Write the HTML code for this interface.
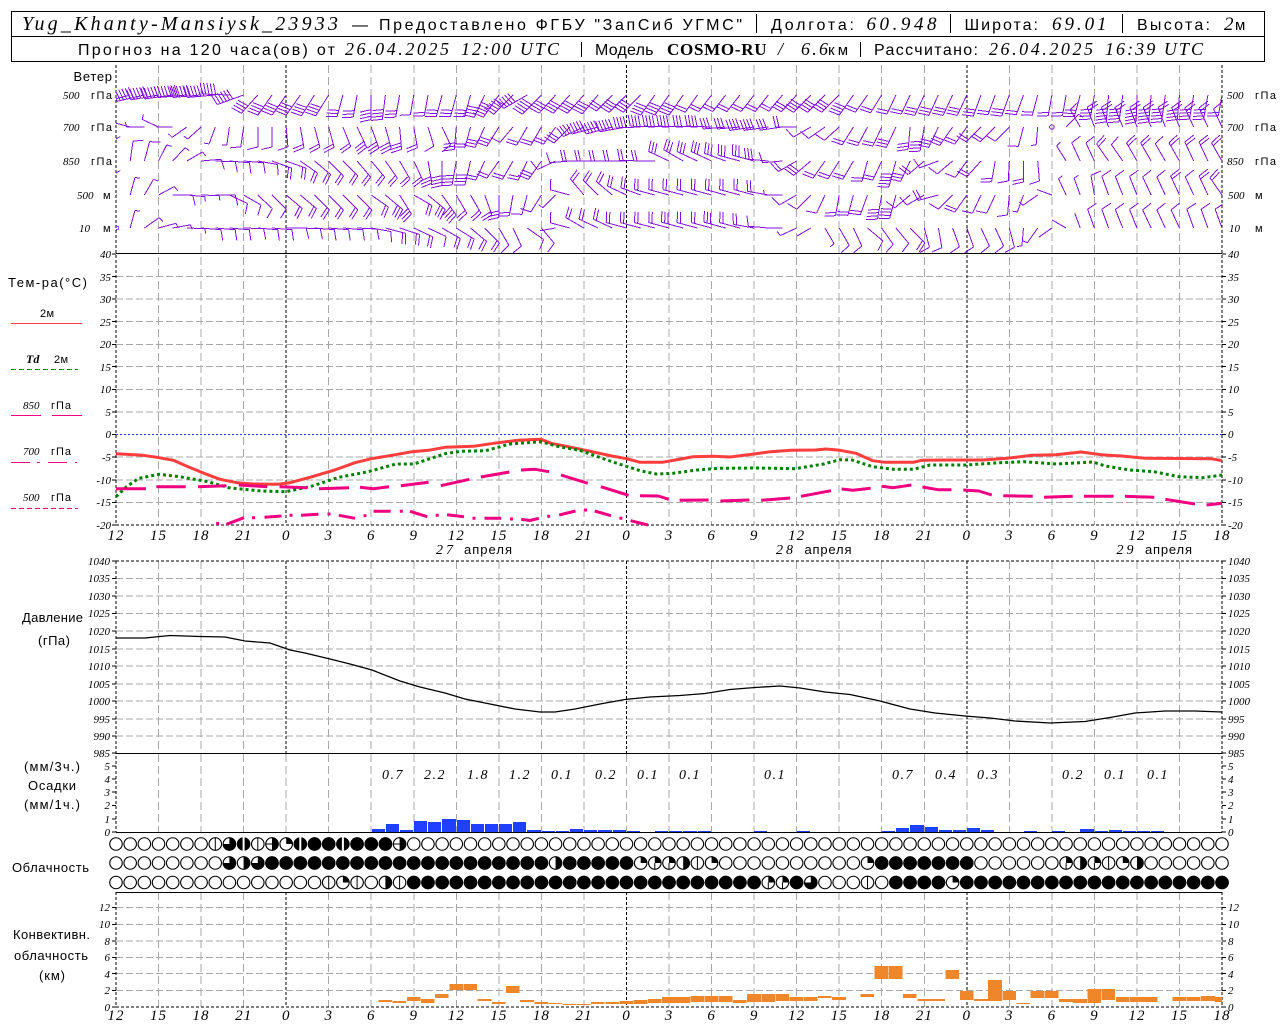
<!DOCTYPE html>
<html><head><meta charset="utf-8"><style>
html,body{margin:0;padding:0;background:#fff}
svg{display:block}
text{fill:#000;white-space:pre}
.s{font-family:"Liberation Sans","DejaVu Sans",sans-serif}
.i{font-family:"Liberation Serif",serif;font-style:italic}
.a{font-family:"Liberation Serif",serif;font-style:italic;font-size:11px}
.h{font-family:"Liberation Serif",serif;font-style:italic;font-size:15px;letter-spacing:1px;text-anchor:middle}
.p{font-family:"Liberation Serif",serif;font-style:italic;font-size:14px;letter-spacing:1.5px;text-anchor:middle}
.e{text-anchor:end}
</style></head><body>
<svg xmlns="http://www.w3.org/2000/svg" width="1280" height="1024" viewBox="0 0 1280 1024">
<defs>
<clipPath id="cp"><rect x="116" y="60" width="1106.5" height="200"/></clipPath>
<path id="z" d="M0 0V-16"/>
<path id="h" d="M0 0V-18M0-18l5-1"/>
<path id="b1" d="M0 0V-20M0-20l10.5-2.5"/>
<path id="b2" d="M0 0V-21M0-21l11-2.5M0-17.7l11-2.5"/>
<path id="b3" d="M0 0V-22.5M0-22.5l11-2.5M0-19.2l11-2.5M0-15.9l11-2.5"/>
<path id="b4" d="M0 0V-24.5M0-24.5l11-2.5M0-21.2l11-2.5M0-17.9l11-2.5M0-14.6l11-2.5"/>
<path id="b5" d="M0 0V-27M0-27l11-2.5M0-23.7l11-2.5M0-20.4l11-2.5M0-17.1l11-2.5M0-13.8l11-2.5"/>
<path id="b6" d="M0 0V-28M0-28l11-2.5M0-24.7l11-2.5M0-21.4l11-2.5M0-18.1l11-2.5M0-14.8l11-2.5M0-11.5l11-2.5"/>
<path id="b7" d="M0 0V-29M0-29l11-2.5M0-25.7l11-2.5M0-22.4l11-2.5M0-19.1l11-2.5M0-15.8l11-2.5M0-12.5l11-2.5M0-9.2l11-2.5"/>
<g id="cV"><circle r="6.2" fill="#fff" stroke="#000"/><path d="M0-6V6" stroke="#000" fill="none"/></g>
<g id="cQ"><circle r="6.2" fill="#fff" stroke="#000"/><path d="M0 0V-6.6A6.6 6.6 0 0 1 6.6 0Z"/></g>
<g id="cW"><circle r="6.2" fill="#fff" stroke="#000"/><path d="M0 0V-6.6A6.6 6.6 0 0 1 6.6 0Z"/><path d="M0 0V6" stroke="#000" fill="none"/></g>
<g id="cR"><circle r="6.2" fill="#fff" stroke="#000"/><path d="M0-6.6A6.6 6.6 0 0 1 0 6.6Z"/></g>
<g id="cT"><circle r="6.2" fill="#fff" stroke="#000"/><path d="M0-6.6A6.6 6.6 0 0 1 0 6.6Z"/><path d="M-6 0H0" stroke="#000" fill="none"/></g>
<g id="cA"><circle r="6.2" fill="#fff" stroke="#000"/><path d="M0 0V-6.6A6.6 6.6 0 1 1-6.6 0Z"/></g>
<g id="cS"><circle r="6.6"/><rect x="-1" y="-7" width="2" height="14" fill="#fff"/></g>
</defs>

<!-- header -->
<g fill="none" stroke="#000" stroke-width="1" shape-rendering="crispEdges">
<rect x="11.5" y="11.5" width="1253" height="50"/>
<path d="M11 36.5H1265M756.5 14V33M950.5 14V33M1122.5 14V33M581.5 42V57M860.5 42V57"/>
</g>
<text class="i" x="22" y="30" font-size="20" textLength="316">Yug_Khanty-Mansiysk_23933</text>
<text class="s" x="352" y="30" font-size="16" textLength="11">—</text>
<text class="s" x="379" y="30" font-size="16" textLength="363">Предоставлено ФГБУ "ЗапСиб УГМС"</text>
<text class="s" x="771" y="30" font-size="16" textLength="83">Долгота:</text>
<text class="i" x="866.5" y="30" font-size="19" textLength="70">60.948</text>
<text class="s" x="964.5" y="30" font-size="16" textLength="73.5">Широта:</text>
<text class="i" x="1052" y="30" font-size="19" textLength="54.5">69.01</text>
<text class="s" x="1137" y="30" font-size="16" textLength="73">Высота:</text>
<text class="i" x="1224" y="30" font-size="19">2</text><text class="s" x="1235" y="30" font-size="15">м</text>

<text class="s" x="78" y="55" font-size="16" textLength="257">Прогноз на 120 часа(ов) от</text>
<text class="i" x="345" y="55" font-size="18" textLength="104">26.04.2025</text>
<text class="i" x="461" y="55" font-size="18" textLength="98">12:00 UTC</text>
<text class="s" x="595" y="55" font-size="16" textLength="58.5">Модель</text>
<text font-family="Liberation Serif,serif" font-weight="bold" x="667" y="55" font-size="17" textLength="99.5">COSMO-RU</text>
<text class="i" x="778" y="55" font-size="18">/</text>
<text class="i" x="801" y="55" font-size="18" textLength="27">6.6</text>
<text class="s" x="828" y="55" font-size="15" textLength="20">км</text>
<text class="s" x="874" y="55" font-size="16" textLength="104">Рассчитано:</text>
<text class="i" x="989" y="55" font-size="18" textLength="104">26.04.2025</text>
<text class="i" x="1105" y="55" font-size="18" textLength="98">16:39 UTC</text>

<!-- grids -->
<g fill="none" shape-rendering="crispEdges" stroke-width="1">
<g stroke="#a8a8a8" stroke-dasharray="8 4">
<path d="M158.5 65V525M201.1 65V525M243.6 65V525M328.7 65V525M371.2 65V525M413.8 65V525M456.3 65V525M498.9 65V525M541.4 65V525M583.9 65V525M669 65V525M711.6 65V525M754.1 65V525M796.6 65V525M839.2 65V525M881.7 65V525M924.3 65V525M1009.3 65V525M1051.9 65V525M1094.4 65V525M1137 65V525M1179.5 65V525"/>
<path d="M158.5 561V753M201.1 561V753M243.6 561V753M328.7 561V753M371.2 561V753M413.8 561V753M456.3 561V753M498.9 561V753M541.4 561V753M583.9 561V753M669 561V753M711.6 561V753M754.1 561V753M796.6 561V753M839.2 561V753M881.7 561V753M924.3 561V753M1009.3 561V753M1051.9 561V753M1094.4 561V753M1137 561V753M1179.5 561V753"/>
<path d="M158.5 754V832M201.1 754V832M243.6 754V832M286.2 754V832M328.7 754V832M371.2 754V832M413.8 754V832M456.3 754V832M498.9 754V832M541.4 754V832M583.9 754V832M626.5 754V832M669 754V832M711.6 754V832M754.1 754V832M796.6 754V832M839.2 754V832M881.7 754V832M924.3 754V832M966.8 754V832M1009.3 754V832M1051.9 754V832M1094.4 754V832M1137 754V832M1179.5 754V832"/>
<path d="M158.5 892V1007M201.1 892V1007M243.6 892V1007M328.7 892V1007M371.2 892V1007M413.8 892V1007M456.3 892V1007M498.9 892V1007M541.4 892V1007M583.9 892V1007M669 892V1007M711.6 892V1007M754.1 892V1007M796.6 892V1007M839.2 892V1007M881.7 892V1007M924.3 892V1007M1009.3 892V1007M1051.9 892V1007M1094.4 892V1007M1137 892V1007M1179.5 892V1007"/>
</g>
<g stroke="#a8a8a8" stroke-dasharray="7 3">
<path d="M116 276.7H1222M116 299H1222M116 321.6H1222M116 344.3H1222M116 366.7H1222M116 389.3H1222M116 412H1222M116 457H1222M116 480H1222M116 502.5H1222"/>
<path d="M116 578.5H1222M116 596H1222M116 613.5H1222M116 631H1222M116 649H1222M116 666H1222M116 684H1222M116 701H1222M116 719H1222M116 736H1222"/>
<path d="M116 907.5H1222M116 924.5H1222M116 941H1222M116 957.5H1222M116 973.7H1222M116 990.5H1222"/>
</g>
<path d="M116 434.5H1222" stroke="#2233ff" stroke-dasharray="2 2"/>
<g stroke="#000" stroke-dasharray="3 2">
<path d="M116 65V525M286.2 65V525M626.5 65V525M966.8 65V525M1222 65V525"/>
<path d="M116 561V832M286.2 561V753M626.5 561V753M966.8 561V753M1222 561V832"/>
<path d="M116 892V1007M286.2 892V1007M626.5 892V1007M966.8 892V1007M1222 892V1007"/>
<path d="M116 525H1222M116 561H1222M116 1007H1222"/>
</g>
<path stroke="#000" d="M116 253.5H1222M116 753.5H1222M116 892.5H1222M116 832.5H1222"/>
<path stroke="#000" d="M112 254H116M112 276.7H116M112 299H116M112 321.6H116M112 344.3H116M112 366.7H116M112 389.3H116M112 412H116M112 434.5H116M112 457H116M112 480H116M112 502.5H116M112 525H116M1222 254H1226M1222 276.7H1226M1222 299H1226M1222 321.6H1226M1222 344.3H1226M1222 366.7H1226M1222 389.3H1226M1222 412H1226M1222 434.5H1226M1222 457H1226M1222 480H1226M1222 502.5H1226M1222 525H1226"/>
<path stroke="#000" d="M112 561H116M112 578.5H116M112 596H116M112 613.5H116M112 631H116M112 649H116M112 666H116M112 684H116M112 701H116M112 719H116M112 736H116M112 753H116M1222 561H1226M1222 578.5H1226M1222 596H1226M1222 613.5H1226M1222 631H1226M1222 649H1226M1222 666H1226M1222 684H1226M1222 701H1226M1222 719H1226M1222 736H1226M1222 753H1226"/>
<path stroke="#000" d="M112 766H116M112 779H116M112 792H116M112 805.5H116M112 819H116M112 832H116M1222 766H1226M1222 779H1226M1222 792H1226M1222 805.5H1226M1222 819H1226M1222 832H1226"/>
<path stroke="#000" d="M112 907.5H116M112 924.5H116M112 941H116M112 957.5H116M112 973.7H116M112 990.5H116M112 1007H116M1222 907.5H1226M1222 924.5H1226M1222 941H1226M1222 957.5H1226M1222 973.7H1226M1222 990.5H1226M1222 1007H1226"/>
</g>

<!-- wind barbs -->
<g clip-path="url(#cp)" fill="none" stroke="#8312e0" stroke-width="1" shape-rendering="crispEdges">
<g transform="translate(0,95)">
<use href="#b6" transform="translate(116)rotate(255)"/><use href="#b6" transform="translate(130.2)rotate(255)"/><use href="#b6" transform="translate(144.4)rotate(257)"/><use href="#b6" transform="translate(158.5)rotate(260)"/><use href="#b6" transform="translate(172.7)rotate(262)"/><use href="#b7" transform="translate(186.9)rotate(265)"/><use href="#b6" transform="translate(201.1)rotate(265)"/><use href="#b6" transform="translate(215.3)rotate(265)"/><use href="#b5" transform="translate(229.4)rotate(272)"/><use href="#b6" transform="translate(243.6)rotate(250)"/>
<use href="#b4" transform="translate(257.8)rotate(222)"/><use href="#b4" transform="translate(272)rotate(215)"/><use href="#b4" transform="translate(286.2)rotate(215)"/><use href="#b4" transform="translate(300.3)rotate(215)"/><use href="#b4" transform="translate(314.5)rotate(212)"/><use href="#b4" transform="translate(328.7)rotate(212)"/><use href="#b3" transform="translate(342.9)rotate(195)"/><use href="#b3" transform="translate(357.1)rotate(190)"/><use href="#b4" transform="translate(371.2)rotate(180)"/><use href="#b4" transform="translate(385.4)rotate(187)"/>
<use href="#b3" transform="translate(399.6)rotate(190)"/><use href="#b1" transform="translate(413.8)rotate(190)"/><use href="#b2" transform="translate(428)rotate(190)"/><use href="#b3" transform="translate(442.1)rotate(195)"/><use href="#b3" transform="translate(456.3)rotate(195)"/><use href="#b3" transform="translate(470.5)rotate(195)"/><use href="#b4" transform="translate(484.7)rotate(205)"/><use href="#b5" transform="translate(498.9)rotate(215)"/><use href="#b5" transform="translate(513)rotate(225)"/><use href="#b5" transform="translate(527.2)rotate(240)"/>
<use href="#b5" transform="translate(541.4)rotate(225)"/><use href="#b4" transform="translate(555.6)rotate(222)"/><use href="#b4" transform="translate(569.8)rotate(222)"/><use href="#b4" transform="translate(583.9)rotate(222)"/><use href="#b4" transform="translate(598.1)rotate(220)"/><use href="#b3" transform="translate(612.3)rotate(225)"/><use href="#b4" transform="translate(626.5)rotate(225)"/><use href="#b4" transform="translate(640.7)rotate(225)"/><use href="#b4" transform="translate(654.8)rotate(215)"/><use href="#b4" transform="translate(669)rotate(215)"/>
<use href="#b4" transform="translate(683.2)rotate(215)"/><use href="#b2" transform="translate(697.4)rotate(215)"/><use href="#b2" transform="translate(711.6)rotate(218)"/><use href="#b2" transform="translate(725.7)rotate(218)"/><use href="#b2" transform="translate(739.9)rotate(218)"/><use href="#b2" transform="translate(754.1)rotate(218)"/><use href="#b2" transform="translate(768.3)rotate(218)"/><use href="#b2" transform="translate(782.5)rotate(220)"/><use href="#b3" transform="translate(796.6)rotate(222)"/><use href="#b4" transform="translate(810.8)rotate(225)"/>
<use href="#b4" transform="translate(825)rotate(225)"/><use href="#b4" transform="translate(839.2)rotate(225)"/><use href="#b4" transform="translate(853.4)rotate(215)"/><use href="#b2" transform="translate(867.5)rotate(215)"/><use href="#b2" transform="translate(881.7)rotate(212)"/><use href="#b2" transform="translate(895.9)rotate(205)"/><use href="#b2" transform="translate(910.1)rotate(205)"/><use href="#b3" transform="translate(924.3)rotate(205)"/><use href="#b3" transform="translate(938.4)rotate(205)"/><use href="#b3" transform="translate(952.6)rotate(205)"/>
<use href="#b3" transform="translate(966.8)rotate(205)"/><use href="#b3" transform="translate(981)rotate(200)"/><use href="#b2" transform="translate(995.2)rotate(200)"/><use href="#b3" transform="translate(1009.3)rotate(200)"/><use href="#b2" transform="translate(1023.5)rotate(200)"/><use href="#b2" transform="translate(1037.7)rotate(195)"/><use href="#b2" transform="translate(1051.9)rotate(190)"/><use href="#b2" transform="translate(1066.1)rotate(190)"/><use href="#b3" transform="translate(1080.2)rotate(195)"/><use href="#b4" transform="translate(1094.4)rotate(190)"/>
<use href="#b5" transform="translate(1108.6)rotate(185)"/><use href="#b5" transform="translate(1122.8)rotate(188)"/><use href="#b5" transform="translate(1137)rotate(182)"/><use href="#b5" transform="translate(1151.1)rotate(185)"/><use href="#b5" transform="translate(1165.3)rotate(188)"/><use href="#b4" transform="translate(1179.5)rotate(185)"/><use href="#b4" transform="translate(1193.7)rotate(190)"/><use href="#b4" transform="translate(1207.9)rotate(190)"/><use href="#b2" transform="translate(1222)rotate(190)"/>
</g>
<g transform="translate(0,127)">
<use href="#z" transform="translate(130.2)rotate(285)"/><use href="#h" transform="translate(144.4)rotate(270)"/><use href="#h" transform="translate(158.5)rotate(295)"/><use href="#z" transform="translate(172.7)rotate(270)"/><use href="#h" transform="translate(186.9)rotate(235)"/><use href="#h" transform="translate(201.1)rotate(228)"/><use href="#h" transform="translate(215.3)rotate(200)"/><use href="#h" transform="translate(229.4)rotate(188)"/><use href="#b1" transform="translate(243.6)rotate(188)"/>
<use href="#b1" transform="translate(257.8)rotate(180)"/><use href="#b1" transform="translate(272)rotate(180)"/><use href="#b1" transform="translate(286.2)rotate(175)"/><use href="#b2" transform="translate(300.3)rotate(170)"/><use href="#b2" transform="translate(314.5)rotate(165)"/><use href="#b2" transform="translate(328.7)rotate(165)"/><use href="#b2" transform="translate(342.9)rotate(158)"/><use href="#b3" transform="translate(357.1)rotate(155)"/><use href="#b3" transform="translate(371.2)rotate(160)"/><use href="#b3" transform="translate(385.4)rotate(165)"/>
<use href="#b3" transform="translate(399.6)rotate(175)"/><use href="#b2" transform="translate(413.8)rotate(170)"/><use href="#b1" transform="translate(428)rotate(163)"/><use href="#b1" transform="translate(442.1)rotate(155)"/><use href="#b3" transform="translate(456.3)rotate(185)"/><use href="#b2" transform="translate(470.5)rotate(195)"/><use href="#b3" transform="translate(484.7)rotate(205)"/><use href="#b3" transform="translate(498.9)rotate(212)"/><use href="#b1" transform="translate(513)rotate(220)"/><use href="#b2" transform="translate(527.2)rotate(210)"/>
<use href="#b2" transform="translate(541.4)rotate(210)"/><use href="#b2" transform="translate(555.6)rotate(215)"/><use href="#b3" transform="translate(569.8)rotate(225)"/><use href="#b3" transform="translate(583.9)rotate(245)"/><use href="#b5" transform="translate(598.1)rotate(255)"/><use href="#b5" transform="translate(612.3)rotate(255)"/><use href="#b5" transform="translate(626.5)rotate(260)"/><use href="#b4" transform="translate(640.7)rotate(268)"/><use href="#b4" transform="translate(654.8)rotate(272)"/><use href="#b4" transform="translate(669)rotate(272)"/>
<use href="#b4" transform="translate(683.2)rotate(272)"/><use href="#b3" transform="translate(697.4)rotate(272)"/><use href="#b4" transform="translate(711.6)rotate(272)"/><use href="#b3" transform="translate(725.7)rotate(265)"/><use href="#b3" transform="translate(739.9)rotate(265)"/><use href="#b4" transform="translate(754.1)rotate(262)"/><use href="#b4" transform="translate(768.3)rotate(262)"/><use href="#b3" transform="translate(782.5)rotate(262)"/><use href="#b2" transform="translate(796.6)rotate(270)"/><use href="#b1" transform="translate(810.8)rotate(240)"/>
<use href="#b1" transform="translate(825)rotate(235)"/><use href="#b1" transform="translate(839.2)rotate(228)"/><use href="#b2" transform="translate(853.4)rotate(212)"/><use href="#b2" transform="translate(867.5)rotate(208)"/><use href="#b2" transform="translate(881.7)rotate(205)"/><use href="#b3" transform="translate(895.9)rotate(205)"/><use href="#b3" transform="translate(910.1)rotate(185)"/><use href="#b4" transform="translate(924.3)rotate(190)"/><use href="#b3" transform="translate(938.4)rotate(205)"/><use href="#b3" transform="translate(952.6)rotate(215)"/>
<use href="#b2" transform="translate(966.8)rotate(215)"/><use href="#b2" transform="translate(981)rotate(225)"/><use href="#b2" transform="translate(995.2)rotate(225)"/><use href="#b1" transform="translate(1009.3)rotate(225)"/><use href="#b1" transform="translate(1023.5)rotate(195)"/><use href="#h" transform="translate(1037.7)rotate(185)"/><circle cx="1051.9" r="2.3"/><use href="#h" transform="translate(1066.1)rotate(45)"/><use href="#b1" transform="translate(1080.2)rotate(330)"/><use href="#b2" transform="translate(1094.4)rotate(340)"/>
<use href="#b2" transform="translate(1108.6)rotate(340)"/><use href="#b2" transform="translate(1122.8)rotate(338)"/><use href="#b2" transform="translate(1137)rotate(340)"/><use href="#b2" transform="translate(1151.1)rotate(338)"/><use href="#b2" transform="translate(1165.3)rotate(340)"/><use href="#b2" transform="translate(1179.5)rotate(338)"/><use href="#b2" transform="translate(1193.7)rotate(335)"/><use href="#b2" transform="translate(1207.9)rotate(335)"/><use href="#b1" transform="translate(1222)rotate(335)"/>
</g>
<g transform="translate(0,161)">
<use href="#b1" transform="translate(116)rotate(345)"/><use href="#b1" transform="translate(130.2)rotate(8)"/><use href="#b1" transform="translate(144.4)rotate(15)"/><use href="#h" transform="translate(158.5)rotate(27)"/><use href="#h" transform="translate(172.7)rotate(43)"/><use href="#h" transform="translate(186.9)rotate(60)"/><use href="#b1" transform="translate(201.1)rotate(85)"/><use href="#b1" transform="translate(215.3)rotate(92)"/><use href="#b1" transform="translate(229.4)rotate(95)"/><use href="#b1" transform="translate(243.6)rotate(95)"/>
<use href="#b1" transform="translate(257.8)rotate(100)"/><use href="#b2" transform="translate(272)rotate(110)"/><use href="#b2" transform="translate(286.2)rotate(110)"/><use href="#b2" transform="translate(300.3)rotate(125)"/><use href="#b2" transform="translate(314.5)rotate(130)"/><use href="#b2" transform="translate(328.7)rotate(135)"/><use href="#b2" transform="translate(342.9)rotate(135)"/><use href="#b2" transform="translate(357.1)rotate(140)"/><use href="#b2" transform="translate(371.2)rotate(140)"/><use href="#b2" transform="translate(385.4)rotate(145)"/>
<use href="#b2" transform="translate(399.6)rotate(150)"/><use href="#b2" transform="translate(413.8)rotate(155)"/><use href="#b3" transform="translate(428)rotate(170)"/><use href="#b4" transform="translate(442.1)rotate(180)"/><use href="#b4" transform="translate(456.3)rotate(190)"/><use href="#b4" transform="translate(470.5)rotate(193)"/><use href="#b2" transform="translate(484.7)rotate(205)"/><use href="#b2" transform="translate(498.9)rotate(215)"/><use href="#b2" transform="translate(513)rotate(210)"/><use href="#b2" transform="translate(527.2)rotate(205)"/>
<use href="#b3" transform="translate(541.4)rotate(215)"/><use href="#b1" transform="translate(555.6)rotate(245)"/><use href="#b1" transform="translate(569.8)rotate(265)"/><use href="#b2" transform="translate(583.9)rotate(270)"/><use href="#b2" transform="translate(598.1)rotate(270)"/><use href="#b2" transform="translate(612.3)rotate(270)"/><use href="#b2" transform="translate(626.5)rotate(270)"/><use href="#b2" transform="translate(640.7)rotate(272)"/><use href="#b2" transform="translate(654.8)rotate(270)"/><use href="#b3" transform="translate(669)rotate(295)"/>
<use href="#b3" transform="translate(683.2)rotate(300)"/><use href="#b3" transform="translate(697.4)rotate(295)"/><use href="#b3" transform="translate(711.6)rotate(295)"/><use href="#b3" transform="translate(725.7)rotate(290)"/><use href="#b3" transform="translate(739.9)rotate(285)"/><use href="#b3" transform="translate(754.1)rotate(285)"/><use href="#b3" transform="translate(768.3)rotate(275)"/><use href="#b1" transform="translate(782.5)rotate(265)"/><use href="#b2" transform="translate(796.6)rotate(240)"/><use href="#b3" transform="translate(810.8)rotate(230)"/>
<use href="#b2" transform="translate(825)rotate(215)"/><use href="#b2" transform="translate(839.2)rotate(212)"/><use href="#b2" transform="translate(853.4)rotate(210)"/><use href="#b2" transform="translate(867.5)rotate(195)"/><use href="#b2" transform="translate(881.7)rotate(205)"/><use href="#b5" transform="translate(895.9)rotate(195)"/><use href="#b3" transform="translate(910.1)rotate(205)"/><use href="#b2" transform="translate(924.3)rotate(230)"/><use href="#b1" transform="translate(938.4)rotate(250)"/><use href="#b1" transform="translate(952.6)rotate(230)"/>
<use href="#b1" transform="translate(966.8)rotate(215)"/><use href="#b2" transform="translate(981)rotate(222)"/><use href="#b2" transform="translate(995.2)rotate(190)"/><use href="#b1" transform="translate(1009.3)rotate(183)"/><use href="#b2" transform="translate(1023.5)rotate(180)"/><use href="#b1" transform="translate(1037.7)rotate(175)"/><use href="#h" transform="translate(1066.1)rotate(328)"/><use href="#b1" transform="translate(1080.2)rotate(335)"/><use href="#b1" transform="translate(1094.4)rotate(335)"/>
<use href="#b2" transform="translate(1108.6)rotate(325)"/><use href="#b1" transform="translate(1122.8)rotate(325)"/><use href="#b2" transform="translate(1137)rotate(330)"/><use href="#b2" transform="translate(1151.1)rotate(330)"/><use href="#b1" transform="translate(1165.3)rotate(330)"/><use href="#b2" transform="translate(1179.5)rotate(330)"/><use href="#b2" transform="translate(1193.7)rotate(335)"/><use href="#b2" transform="translate(1207.9)rotate(335)"/><use href="#b2" transform="translate(1222)rotate(330)"/>
</g>
<g transform="translate(0,195)">
<use href="#b1" transform="translate(116)rotate(345)"/><use href="#h" transform="translate(130.2)rotate(15)"/><use href="#h" transform="translate(144.4)rotate(30)"/><use href="#h" transform="translate(158.5)rotate(62)"/><use href="#b1" transform="translate(172.7)rotate(90)"/><use href="#h" transform="translate(186.9)rotate(95)"/><use href="#h" transform="translate(201.1)rotate(92)"/><use href="#b1" transform="translate(215.3)rotate(90)"/><use href="#b1" transform="translate(229.4)rotate(115)"/><use href="#b1" transform="translate(243.6)rotate(120)"/>
<use href="#b1" transform="translate(257.8)rotate(133)"/><use href="#b1" transform="translate(272)rotate(135)"/><use href="#b2" transform="translate(286.2)rotate(130)"/><use href="#b2" transform="translate(300.3)rotate(130)"/><use href="#b2" transform="translate(314.5)rotate(135)"/><use href="#b2" transform="translate(328.7)rotate(135)"/><use href="#b2" transform="translate(342.9)rotate(135)"/><use href="#b2" transform="translate(357.1)rotate(135)"/><use href="#b2" transform="translate(371.2)rotate(125)"/><use href="#b3" transform="translate(385.4)rotate(130)"/>
<use href="#b3" transform="translate(399.6)rotate(148)"/><use href="#b2" transform="translate(413.8)rotate(120)"/><use href="#b3" transform="translate(428)rotate(130)"/><use href="#b4" transform="translate(442.1)rotate(145)"/><use href="#b2" transform="translate(456.3)rotate(150)"/><use href="#b2" transform="translate(470.5)rotate(150)"/><use href="#b2" transform="translate(484.7)rotate(160)"/><use href="#b3" transform="translate(498.9)rotate(180)"/><use href="#b2" transform="translate(513)rotate(190)"/><use href="#b1" transform="translate(527.2)rotate(195)"/>
<use href="#b1" transform="translate(541.4)rotate(212)"/><use href="#h" transform="translate(555.6)rotate(225)"/><use href="#b1" transform="translate(569.8)rotate(285)"/><use href="#b2" transform="translate(583.9)rotate(320)"/><use href="#b2" transform="translate(598.1)rotate(315)"/><use href="#b2" transform="translate(612.3)rotate(310)"/><use href="#b2" transform="translate(626.5)rotate(295)"/><use href="#b2" transform="translate(640.7)rotate(290)"/><use href="#b2" transform="translate(654.8)rotate(285)"/><use href="#b2" transform="translate(669)rotate(285)"/>
<use href="#b2" transform="translate(683.2)rotate(285)"/><use href="#b2" transform="translate(697.4)rotate(285)"/><use href="#b2" transform="translate(711.6)rotate(285)"/><use href="#b2" transform="translate(725.7)rotate(285)"/><use href="#b2" transform="translate(739.9)rotate(285)"/><use href="#b2" transform="translate(754.1)rotate(285)"/><use href="#b2" transform="translate(768.3)rotate(280)"/><use href="#h" transform="translate(782.5)rotate(270)"/><use href="#b1" transform="translate(796.6)rotate(240)"/><use href="#b1" transform="translate(810.8)rotate(225)"/>
<use href="#b1" transform="translate(825)rotate(205)"/><use href="#b2" transform="translate(839.2)rotate(190)"/><use href="#b2" transform="translate(853.4)rotate(195)"/><use href="#b2" transform="translate(867.5)rotate(200)"/><use href="#b4" transform="translate(881.7)rotate(190)"/><use href="#b4" transform="translate(895.9)rotate(195)"/><use href="#b1" transform="translate(910.1)rotate(230)"/><use href="#b1" transform="translate(924.3)rotate(240)"/><use href="#b2" transform="translate(938.4)rotate(255)"/><use href="#b1" transform="translate(952.6)rotate(225)"/>
<use href="#b2" transform="translate(966.8)rotate(215)"/><use href="#b1" transform="translate(981)rotate(205)"/><use href="#b1" transform="translate(995.2)rotate(205)"/><use href="#b1" transform="translate(1009.3)rotate(185)"/><use href="#h" transform="translate(1023.5)rotate(200)"/><use href="#h" transform="translate(1037.7)rotate(235)"/><use href="#z" transform="translate(1051.9)rotate(290)"/><use href="#h" transform="translate(1066.1)rotate(335)"/><use href="#h" transform="translate(1080.2)rotate(340)"/><use href="#b1" transform="translate(1094.4)rotate(350)"/>
<use href="#b1" transform="translate(1108.6)rotate(340)"/><use href="#b1" transform="translate(1122.8)rotate(338)"/><use href="#b1" transform="translate(1137)rotate(338)"/><use href="#b1" transform="translate(1151.1)rotate(335)"/><use href="#b1" transform="translate(1165.3)rotate(335)"/><use href="#b2" transform="translate(1179.5)rotate(335)"/><use href="#b1" transform="translate(1193.7)rotate(335)"/><use href="#b2" transform="translate(1207.9)rotate(335)"/><use href="#b2" transform="translate(1222)rotate(325)"/>
</g>
<g transform="translate(0,228)">
<circle cx="117" r="1.8"/><use href="#h" transform="translate(130.2)rotate(15)"/><use href="#h" transform="translate(144.4)rotate(55)"/><use href="#h" transform="translate(158.5)rotate(75)"/><use href="#h" transform="translate(172.7)rotate(80)"/><use href="#h" transform="translate(186.9)rotate(92)"/><use href="#b1" transform="translate(201.1)rotate(95)"/><use href="#b1" transform="translate(215.3)rotate(95)"/><use href="#b1" transform="translate(229.4)rotate(95)"/><use href="#b1" transform="translate(243.6)rotate(92)"/>
<use href="#b1" transform="translate(257.8)rotate(95)"/><use href="#b1" transform="translate(272)rotate(95)"/><use href="#b1" transform="translate(286.2)rotate(90)"/><use href="#b1" transform="translate(300.3)rotate(92)"/><use href="#b1" transform="translate(314.5)rotate(95)"/><use href="#b1" transform="translate(328.7)rotate(95)"/><use href="#b1" transform="translate(342.9)rotate(95)"/><use href="#b1" transform="translate(357.1)rotate(93)"/><use href="#b1" transform="translate(371.2)rotate(100)"/><use href="#b2" transform="translate(385.4)rotate(105)"/>
<use href="#b2" transform="translate(399.6)rotate(108)"/><use href="#b2" transform="translate(413.8)rotate(115)"/><use href="#b1" transform="translate(428)rotate(115)"/><use href="#b2" transform="translate(442.1)rotate(120)"/><use href="#b2" transform="translate(456.3)rotate(122)"/><use href="#b2" transform="translate(470.5)rotate(130)"/><use href="#b2" transform="translate(484.7)rotate(135)"/><use href="#b1" transform="translate(498.9)rotate(150)"/><use href="#b1" transform="translate(513)rotate(155)"/><use href="#b1" transform="translate(527.2)rotate(125)"/>
<use href="#b1" transform="translate(541.4)rotate(140)"/><use href="#z" transform="translate(555.6)rotate(260)"/><use href="#b1" transform="translate(569.8)rotate(285)"/><use href="#b2" transform="translate(583.9)rotate(300)"/><use href="#b2" transform="translate(598.1)rotate(295)"/><use href="#b2" transform="translate(612.3)rotate(295)"/><use href="#b2" transform="translate(626.5)rotate(285)"/><use href="#b2" transform="translate(640.7)rotate(285)"/><use href="#b2" transform="translate(654.8)rotate(285)"/><use href="#b2" transform="translate(669)rotate(285)"/>
<use href="#b3" transform="translate(683.2)rotate(285)"/><use href="#b2" transform="translate(697.4)rotate(285)"/><use href="#b2" transform="translate(711.6)rotate(285)"/><use href="#b3" transform="translate(725.7)rotate(285)"/><use href="#b2" transform="translate(739.9)rotate(285)"/><use href="#b2" transform="translate(754.1)rotate(280)"/><use href="#b1" transform="translate(768.3)rotate(275)"/><use href="#z" transform="translate(782.5)rotate(270)"/><use href="#h" transform="translate(796.6)rotate(245)"/><use href="#z" transform="translate(810.8)rotate(240)"/>
<use href="#h" transform="translate(825)rotate(150)"/><use href="#b1" transform="translate(839.2)rotate(150)"/><use href="#b1" transform="translate(853.4)rotate(155)"/><use href="#b1" transform="translate(867.5)rotate(130)"/><use href="#b1" transform="translate(881.7)rotate(145)"/><use href="#b1" transform="translate(895.9)rotate(140)"/><use href="#b2" transform="translate(910.1)rotate(135)"/><use href="#b1" transform="translate(924.3)rotate(165)"/><use href="#b1" transform="translate(938.4)rotate(170)"/><use href="#b1" transform="translate(952.6)rotate(160)"/>
<use href="#b1" transform="translate(966.8)rotate(160)"/><use href="#b1" transform="translate(981)rotate(155)"/><use href="#b1" transform="translate(995.2)rotate(155)"/><use href="#b1" transform="translate(1009.3)rotate(165)"/><use href="#h" transform="translate(1023.5)rotate(185)"/><use href="#h" transform="translate(1037.7)rotate(215)"/><use href="#z" transform="translate(1051.9)rotate(235)"/><use href="#z" transform="translate(1066.1)rotate(300)"/><use href="#z" transform="translate(1080.2)rotate(340)"/><use href="#b1" transform="translate(1094.4)rotate(340)"/>
<use href="#b1" transform="translate(1108.6)rotate(340)"/><use href="#b1" transform="translate(1122.8)rotate(338)"/><use href="#b1" transform="translate(1137)rotate(338)"/><use href="#b1" transform="translate(1151.1)rotate(335)"/><use href="#b1" transform="translate(1165.3)rotate(335)"/><use href="#b1" transform="translate(1179.5)rotate(335)"/><use href="#b1" transform="translate(1193.7)rotate(340)"/><use href="#b1" transform="translate(1207.9)rotate(340)"/><use href="#b1" transform="translate(1222)rotate(340)"/>
</g>
</g>

<!-- temperature curves -->
<g fill="none" stroke-linejoin="round">
<path stroke="#ff3d3d" stroke-width="3" d="M116 453.7L143 455.3L157 457.3L173.5 460.3L188 466.7L204 473.3L220 479.3L237 482.7L253 484L277.6 484.3L290 482.7L310 477.3L334.7 470L355 462.7L371.4 458.7L392 455.3L412 451.7L428.6 450.3L445 447.3L473.5 446.3L498 442.7L518 440.3L541 439.3L551 443.3L571.4 447.3L592 451.7L612 456L626.5 458.7L640 462.3L662 462.3L681 459L693 456.7L713.5 456.3L730 457L754 454L770.6 451.7L791 450.3L815.5 450L825.7 449L840 450.3L856 453.3L872.7 460.7L885 462.3L913.5 462.3L921.6 460.3L950 460L983 460L1007 458.3L1032 455.3L1056 454.7L1081 452L1101 454.7L1121.6 456L1146 458.3L1211 458.7L1222 460.7"/>
<path stroke="#008000" stroke-width="3" stroke-dasharray="3 3" d="M116 496.7L126.5 486.7L138.8 478.3L159 474.3L179.6 476.7L208 481.7L228.6 487.7L261 491L285.7 491.7L310 486.7L338.8 477.3L367 472L396 464L414 464L445 453.7L461 451.3L485.7 450.7L510 444L541 441.7L559 446.7L579.6 450.3L612 461.7L640 470.7L656.3 474L672.7 473.3L697 470L717.6 468.3L758.4 468L795 468.7L823.7 464L840 459.7L852 460L872.7 466.7L893 469.3L913.5 469.3L929.8 465L966.5 465L995 463L1023.7 461.7L1056.3 464L1093 462L1105.3 466L1129.8 470L1154 471.7L1178.8 476.7L1203 477.7L1222 475"/>
<path stroke="#f00080" stroke-width="3" d="M116 488.7H146M156.3 486.7H185.7M198 486.7L226.5 485.7M238.8 485L267.3 486.7M279.6 486.7L307 487.7M319 488.7L349 487.7M360 487.3L373.5 488.7L389 486.7M400.8 485.7L428.6 482.3M440.8 485.7L469.4 479.3M480.8 477L509.4 472M521 470L535 469.3L549 471.7M561 475L587.8 483.3M600.8 486.7L628.6 495.3M640 495.7L658.4 496L668.6 499.3M679.6 500.3L708.6 500M720.4 501L749.4 500M761.2 500.3L790.2 498M801 496.3L831 490.7M841.6 489L853 490.3L870.6 488.3M882 486.3L893 487.7L911.4 485M922.4 487L938 489.7L951.4 489.7M963.3 490L978.8 491L991.8 495M1003.3 495.7L1032.7 496.3M1044 497.3L1072.7 496.3M1084 496.3L1113.5 496.3M1125 496.3L1154.3 497.3M1165.3 499.3L1195 504M1206.5 505L1222 503.3"/>
<path stroke="#f00080" stroke-width="3" d="M217.6 522V525M226.5 524.3L244 517.7M252 517.7H255M264.5 517.3L281.6 516M289.5 515.3H292.5M301 515.3L318.4 514.3M327.5 514H330.5M338.8 515.3L355 518.3M363.5 515.7H366.5M373.5 511.3H390.6M399.8 511.3H402.8M410 511.3L427.3 516.7M435.7 515.3H438.7M447 514.7L464 516.7M472.5 518.3H475.5M484.5 518.3H501.2M510 519H513M521.2 519.3L530 520.5L538.8 518.3M547.2 516.3H550.2M559.2 515L575.5 511M584 510H587M594.7 511L611 515.7M619.4 518.3H622.4M630.6 520.7L648 525"/>
</g>
<!-- pressure -->
<path fill="none" stroke="#000" stroke-width="1.3" d="M116 638L145 638L170 635.5L200 636.5L225 637L245 641L270 643L290 650L305 653L330 659L350 664L372 670L400 681L420 687L445 693L465 699L490 704L515 709L540 712L555 712L575 709L600 704L625 699.5L650 697L680 695.5L705 693.5L730 689.5L755 687.5L780 686L800 688L825 692L850 694.5L880 701L910 709L935 713L965 716L990 718L1015 721L1050 723L1085 721.5L1110 717.5L1135 713L1165 711L1195 711L1222 712"/>

<!-- legend lines -->
<g fill="none" stroke-width="1" shape-rendering="crispEdges">
<path stroke="#ff3d3d" d="M11 323.5H82"/>
<path stroke="#008000" stroke-dasharray="5 3" d="M11 369.5H78"/>
<path stroke="#f00080" d="M11 415.5H41M52 415.5H82M11 462.5H30M37 462.5H40M48 462.5H67M75 462.5H77"/>
<path stroke="#f00080" stroke-dasharray="5 3" d="M11 508.5H78"/>
</g>

<!-- precip bars -->
<path fill="#2040ff" shape-rendering="crispEdges" d="M372 829h13v3h-13zM386 824h13v8h-13zM400 830h13v2h-13zM414 821h13v11h-13zM428 822h13v10h-13zM442 819h14v13h-14zM457 820h13v12h-13zM471 824h13v8h-13zM485 824h13v8h-13zM499 824h13v8h-13zM513 822h13v10h-13zM527 830h14v2h-14zM542 831h13v1h-13zM556 831h13v1h-13zM570 829h13v3h-13zM584 830h13v2h-13zM598 830h14v2h-14zM613 830h13v2h-13zM627 831h13v1h-13zM655 831h13v1h-13zM669 831h13v1h-13zM683 831h14v1h-14zM698 831h13v1h-13zM754 831h13v1h-13zM797 831h13v1h-13zM882 831h13v1h-13zM896 828h13v4h-13zM910 825h14v7h-14zM925 827h13v5h-13zM939 830h13v2h-13zM953 830h13v2h-13zM967 828h13v4h-13zM981 830h13v2h-13zM1024 831h13v1h-13zM1052 831h13v1h-13zM1080 829h14v3h-14zM1095 831h13v1h-13zM1109 830h13v2h-13zM1123 831h13v1h-13zM1137 831h13v1h-13zM1151 831h13v1h-13z"/>

<!-- convective bars -->
<path fill="#f0862a" shape-rendering="crispEdges" d="M378.4 1000h13.6v2h-13.6zM392.6 1001h13.6v2h-13.6zM406.8 997h13.6v4h-13.6zM421 999h13.6v4h-13.6zM435.1 994h13.6v4h-13.6zM449.3 984h13.6v6h-13.6zM463.5 984h13.6v6h-13.6zM477.7 999h13.6v2h-13.6zM491.9 1002h13.6v2h-13.6zM506 986h13.6v7h-13.6zM520.2 1000h13.6v2h-13.6zM534.4 1002h13.6v2h-13.6zM548.6 1003h13.6v1h-13.6zM562.8 1004h13.6v1h-13.6zM576.9 1004h13.6v1h-13.6zM591.1 1002h13.6v2h-13.6zM605.3 1002h13.6v2h-13.6zM619.5 1001h13.6v3h-13.6zM633.7 1000h13.6v4h-13.6zM647.8 999h13.6v4h-13.6zM662 997h14v6h-14zM676.2 997h13.6v6h-13.6zM690.4 996h13.6v6h-13.6zM704.6 996h13.6v6h-13.6zM718.7 996h13.6v6h-13.6zM732.9 1000h13.6v3h-13.6zM747.1 994h14v8h-14zM761.3 994h13.6v8h-13.6zM775.5 994h13.6v7h-13.6zM789.6 997h14v4h-14zM803.8 997h13.6v4h-13.6zM818 996h13.6v2h-13.6zM832.2 997h13.6v3h-13.6zM860.5 994h13.6v3h-13.6zM874.7 966h14v13h-14zM888.9 966h13.6v13h-13.6zM903.1 994h13.6v4h-13.6zM917.3 999h14v2h-14zM931.4 999h13.6v2h-13.6zM945.6 970h13.6v9h-13.6zM959.8 991h13.6v9h-13.6zM974 999h14v2h-14zM988.2 980h13.6v21h-13.6zM1002.3 991h13.6v9h-13.6zM1016.5 1003h13.6v1h-13.6zM1030.7 991h13.6v7h-13.6zM1044.9 991h13.6v7h-13.6zM1059.1 999h14v3h-14zM1073.2 999h14v4h-14zM1087.4 989h13.6v14h-13.6zM1101.6 989h13.6v11h-13.6zM1115.8 997h13.6v5h-13.6zM1130 997h14v5h-14zM1144.1 997h13.6v5h-13.6zM1172.5 997h13.6v4h-13.6zM1186.7 997h13.6v4h-13.6zM1200.9 996h14v5h-14zM1215 997h7v5h-7z"/>

<!-- cloud circles -->
<g fill="none" stroke-linecap="round">
<g stroke="#000" stroke-width="13.6" stroke-dasharray="0 14.1795"><path d="M116 844H1222.1M116 863H1222.1M116 882.5H1222.1"/></g>
<g stroke="#fff" stroke-width="11.4" stroke-dasharray="0 14.1795"><path d="M116 844H1222.1M116 863H1222.1M116 882.5H1222.1"/></g>
<g stroke="#000" stroke-width="13.6" stroke-dasharray="0 14.1795"><path d="M314.5 844H328.8M357.1 844H385.5M272 863H541.5M569.8 863H626.6M881.7 863H966.9M413.8 882.5H754.2M796.6 882.5h.1M895.9 882.5H938.5M966.8 882.5H1222.1"/></g>
</g>
<g>
<use href="#cV" x="215.3" y="844"/><use href="#cA" x="229.4" y="844"/><use href="#cS" x="243.6" y="844"/><use href="#cV" x="257.8" y="844"/><use href="#cT" x="272" y="844"/><use href="#cQ" x="286.2" y="844"/><use href="#cS" x="300.3" y="844"/><use href="#cS" x="342.9" y="844"/><use href="#cT" x="399.6" y="844"/>
<use href="#cA" x="229.4" y="863"/><use href="#cR" x="243.6" y="863"/><use href="#cA" x="257.8" y="863"/><use href="#cR" x="555.6" y="863"/><use href="#cQ" x="640.7" y="863"/><use href="#cW" x="654.8" y="863"/><use href="#cW" x="669" y="863"/><use href="#cR" x="683.2" y="863"/><use href="#cV" x="697.4" y="863"/><use href="#cQ" x="711.6" y="863"/><use href="#cQ" x="867.5" y="863"/><use href="#cW" x="1066.1" y="863"/><use href="#cR" x="1080.2" y="863"/><use href="#cW" x="1094.4" y="863"/><use href="#cV" x="1108.6" y="863"/><use href="#cQ" x="1122.8" y="863"/><use href="#cR" x="1137" y="863"/>
<use href="#cV" x="328.7" y="882.5"/><use href="#cQ" x="342.9" y="882.5"/><use href="#cV" x="357.1" y="882.5"/><use href="#cR" x="385.4" y="882.5"/><use href="#cV" x="399.6" y="882.5"/><use href="#cW" x="768.3" y="882.5"/><use href="#cW" x="782.5" y="882.5"/><use href="#cA" x="810.8" y="882.5"/><use href="#cV" x="867.5" y="882.5"/><use href="#cQ" x="952.6" y="882.5"/>
</g>

<!-- wind labels -->
<text class="s" x="73.5" y="81" font-size="13" textLength="38.5">Ветер</text>
<g>
<text class="a" x="63" y="99">500</text><text class="s" x="91" y="99" font-size="11" textLength="21">гПа</text>
<text class="a" x="63" y="131">700</text><text class="s" x="91" y="131" font-size="11" textLength="21">гПа</text>
<text class="a" x="63" y="165">850</text><text class="s" x="91" y="165" font-size="11" textLength="21">гПа</text>
<text class="a" x="77" y="199">500</text><text class="s" x="103" y="199" font-size="11">м</text>
<text class="a" x="79" y="232">10</text><text class="s" x="103" y="232" font-size="11">м</text>
<text class="a" x="1227" y="99">500</text><text class="s" x="1255" y="99" font-size="11" textLength="21">гПа</text>
<text class="a" x="1227" y="131">700</text><text class="s" x="1255" y="131" font-size="11" textLength="21">гПа</text>
<text class="a" x="1227" y="165">850</text><text class="s" x="1255" y="165" font-size="11" textLength="21">гПа</text>
<text class="a" x="1228" y="199">500</text><text class="s" x="1255" y="199" font-size="11">м</text>
<text class="a" x="1229" y="232">10</text><text class="s" x="1255" y="232" font-size="11">м</text>
</g>

<!-- temp labels -->
<text class="s" x="8" y="287" font-size="13" textLength="79">Тем-ра(°C)</text>
<text class="s" x="40" y="317" font-size="11" textLength="14">2м</text>
<text class="i" x="26" y="363" font-size="12" font-weight="bold">Td</text><text class="s" x="54" y="363" font-size="11" textLength="14">2м</text>
<text class="a" x="23" y="409">850</text><text class="s" x="51" y="409" font-size="11" textLength="20">гПа</text>
<text class="a" x="23" y="455">700</text><text class="s" x="51" y="455" font-size="11" textLength="20">гПа</text>
<text class="a" x="23" y="501">500</text><text class="s" x="51" y="501" font-size="11" textLength="20">гПа</text>
<g class="a">
<text class="a e" x="111" y="258">40</text><text class="a e" x="111" y="281">35</text><text class="a e" x="111" y="303">30</text><text class="a e" x="111" y="326">25</text><text class="a e" x="111" y="348">20</text><text class="a e" x="111" y="371">15</text><text class="a e" x="111" y="393">10</text><text class="a e" x="111" y="416">5</text><text class="a e" x="111" y="438">0</text><text class="a e" x="111" y="461">-5</text><text class="a e" x="111" y="484">-10</text><text class="a e" x="111" y="506">-15</text><text class="a e" x="111" y="529">-20</text>
<text class="a" x="1228" y="258">40</text><text class="a" x="1228" y="281">35</text><text class="a" x="1228" y="303">30</text><text class="a" x="1228" y="326">25</text><text class="a" x="1228" y="348">20</text><text class="a" x="1228" y="371">15</text><text class="a" x="1228" y="393">10</text><text class="a" x="1228" y="416">5</text><text class="a" x="1228" y="438">0</text><text class="a" x="1228" y="461">-5</text><text class="a" x="1228" y="484">-10</text><text class="a" x="1228" y="506">-15</text><text class="a" x="1228" y="529">-20</text>
</g>

<!-- hours mid -->
<text class="h" x="116" y="540">12</text><text class="h" x="158.5" y="540">15</text><text class="h" x="201" y="540">18</text><text class="h" x="243.6" y="540">21</text><text class="h" x="286.2" y="540">0</text><text class="h" x="328.7" y="540">3</text><text class="h" x="371.2" y="540">6</text><text class="h" x="413.8" y="540">9</text><text class="h" x="456.3" y="540">12</text><text class="h" x="498.9" y="540">15</text><text class="h" x="541.4" y="540">18</text><text class="h" x="583.9" y="540">21</text><text class="h" x="626.5" y="540">0</text><text class="h" x="669" y="540">3</text><text class="h" x="711.6" y="540">6</text><text class="h" x="754.1" y="540">9</text><text class="h" x="796.6" y="540">12</text><text class="h" x="839.2" y="540">15</text><text class="h" x="881.7" y="540">18</text><text class="h" x="924.3" y="540">21</text><text class="h" x="966.8" y="540">0</text><text class="h" x="1009.3" y="540">3</text><text class="h" x="1051.9" y="540">6</text><text class="h" x="1094.4" y="540">9</text><text class="h" x="1137" y="540">12</text><text class="h" x="1179.5" y="540">15</text><text class="h" x="1222" y="540">18</text>
<text class="i" x="436" y="554" font-size="14" textLength="17">27</text><text class="s" x="464" y="554" font-size="13" textLength="48">апреля</text>
<text class="i" x="776" y="554" font-size="14" textLength="17">28</text><text class="s" x="804.5" y="554" font-size="13" textLength="47">апреля</text>
<text class="i" x="1116.5" y="554" font-size="14" textLength="17">29</text><text class="s" x="1145" y="554" font-size="13" textLength="47">апреля</text>

<!-- pressure labels -->
<text class="s" x="22" y="622" font-size="13" textLength="61">Давление</text>
<text class="s" x="38" y="645" font-size="13" textLength="32">(гПа)</text>
<text class="a e" x="110" y="565">1040</text><text class="a e" x="110" y="582">1035</text><text class="a e" x="110" y="600">1030</text><text class="a e" x="110" y="617">1025</text><text class="a e" x="110" y="635">1020</text><text class="a e" x="110" y="653">1015</text><text class="a e" x="110" y="670">1010</text><text class="a e" x="110" y="688">1005</text><text class="a e" x="110" y="705">1000</text><text class="a e" x="110" y="723">995</text><text class="a e" x="110" y="740">990</text><text class="a e" x="110" y="757">985</text>
<text class="a" x="1228" y="565">1040</text><text class="a" x="1228" y="582">1035</text><text class="a" x="1228" y="600">1030</text><text class="a" x="1228" y="617">1025</text><text class="a" x="1228" y="635">1020</text><text class="a" x="1228" y="653">1015</text><text class="a" x="1228" y="670">1010</text><text class="a" x="1228" y="688">1005</text><text class="a" x="1228" y="705">1000</text><text class="a" x="1228" y="723">995</text><text class="a" x="1228" y="740">990</text><text class="a" x="1228" y="757">985</text>

<!-- precip labels -->
<text class="s" x="24" y="771" font-size="13" textLength="56">(мм/3ч.)</text>
<text class="s" x="28" y="790" font-size="13" textLength="48">Осадки</text>
<text class="s" x="24" y="809" font-size="13" textLength="56">(мм/1ч.)</text>
<text class="a e" x="110" y="770">5</text><text class="a e" x="110" y="783">4</text><text class="a e" x="110" y="796">3</text><text class="a e" x="110" y="809">2</text><text class="a e" x="110" y="823">1</text><text class="a e" x="110" y="836">0</text>
<text class="a" x="1228" y="770">5</text><text class="a" x="1228" y="783">4</text><text class="a" x="1228" y="796">3</text><text class="a" x="1228" y="809">2</text><text class="a" x="1228" y="823">1</text><text class="a" x="1228" y="836">0</text>
<text class="p" x="393" y="779">0.7</text><text class="p" x="435" y="779">2.2</text><text class="p" x="478" y="779">1.8</text><text class="p" x="520" y="779">1.2</text><text class="p" x="562" y="779">0.1</text><text class="p" x="606" y="779">0.2</text><text class="p" x="648" y="779">0.1</text><text class="p" x="690" y="779">0.1</text><text class="p" x="775" y="779">0.1</text><text class="p" x="903" y="779">0.7</text><text class="p" x="946" y="779">0.4</text><text class="p" x="988" y="779">0.3</text><text class="p" x="1073" y="779">0.2</text><text class="p" x="1115" y="779">0.1</text><text class="p" x="1158" y="779">0.1</text>

<text class="s" x="12" y="872" font-size="13" textLength="77">Облачность</text>

<!-- conv labels -->
<text class="s" x="13" y="939" font-size="13" textLength="77">Конвективн.</text>
<text class="s" x="14" y="960" font-size="13" textLength="74">облачность</text>
<text class="s" x="39" y="980" font-size="13" textLength="26">(км)</text>
<text class="a e" x="110" y="911">12</text><text class="a e" x="110" y="928">10</text><text class="a e" x="110" y="945">8</text><text class="a e" x="110" y="961">6</text><text class="a e" x="110" y="978">4</text><text class="a e" x="110" y="994">2</text><text class="a e" x="110" y="1011">0</text>
<text class="a" x="1228" y="911">12</text><text class="a" x="1228" y="928">10</text><text class="a" x="1228" y="945">8</text><text class="a" x="1228" y="961">6</text><text class="a" x="1228" y="978">4</text><text class="a" x="1228" y="994">2</text><text class="a" x="1228" y="1011">0</text>

<!-- hours bottom -->
<text class="h" x="116" y="1020">12</text><text class="h" x="158.5" y="1020">15</text><text class="h" x="201" y="1020">18</text><text class="h" x="243.6" y="1020">21</text><text class="h" x="286.2" y="1020">0</text><text class="h" x="328.7" y="1020">3</text><text class="h" x="371.2" y="1020">6</text><text class="h" x="413.8" y="1020">9</text><text class="h" x="456.3" y="1020">12</text><text class="h" x="498.9" y="1020">15</text><text class="h" x="541.4" y="1020">18</text><text class="h" x="583.9" y="1020">21</text><text class="h" x="626.5" y="1020">0</text><text class="h" x="669" y="1020">3</text><text class="h" x="711.6" y="1020">6</text><text class="h" x="754.1" y="1020">9</text><text class="h" x="796.6" y="1020">12</text><text class="h" x="839.2" y="1020">15</text><text class="h" x="881.7" y="1020">18</text><text class="h" x="924.3" y="1020">21</text><text class="h" x="966.8" y="1020">0</text><text class="h" x="1009.3" y="1020">3</text><text class="h" x="1051.9" y="1020">6</text><text class="h" x="1094.4" y="1020">9</text><text class="h" x="1137" y="1020">12</text><text class="h" x="1179.5" y="1020">15</text><text class="h" x="1222" y="1020">18</text>
</svg>
</body></html>
